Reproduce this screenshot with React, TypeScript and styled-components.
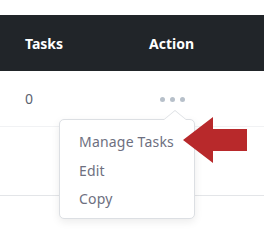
import React from 'react';
import styled, { createGlobalStyle } from 'styled-components';

const GlobalStyle = createGlobalStyle`
  body {
    margin: 0;
    background: #fff;
    font-family: 'Noto Sans', 'Open Sans', sans-serif;
  }
`;

const Screen = styled.div`
  position: relative;
  width: 275px;
  height: 238px;
  overflow: hidden;
  background: #fff;
`;

const Table = styled.div`
  padding-top: 15px;
  width: 264px;
`;

const HeadRow = styled.div`
  display: grid;
  grid-template-columns: 124px 1fr;
  align-items: center;
  height: 56px;
  padding-left: 25px;
  background: #212529;
`;

const HeadCell = styled.div`
  color: #fff;
  font-weight: 700;
  font-size: 14px;
`;

const Row = styled.div<{ $height: number }>`
  display: grid;
  grid-template-columns: 124px 1fr;
  align-items: center;
  height: ${p => p.$height}px;
  padding-left: 25px;
  border-bottom: 1px solid ${p => (p.$height > 60 ? '#e3e5e8' : '#f1f2f4')};
  box-sizing: border-box;
  color: #5b6270;
  font-size: 14px;
`;

const ActionCell = styled.div`
  position: relative;
  height: 100%;
  display: flex;
  align-items: center;
`;

const Dots = styled.div`
  display: flex;
  gap: 5px;
  margin-left: 11px;
  margin-top: 1px;
  span {
    width: 5px;
    height: 5px;
    border-radius: 50%;
    background: #b7c0ca;
  }
`;

const Menu = styled.div`
  position: absolute;
  left: -90px;
  top: 48px;
  width: 136px;
  height: 100px;
  box-sizing: border-box;
  background: #fff;
  border: 1px solid #dcdfe3;
  border-radius: 5px;
  box-shadow: 0 3px 8px rgba(0, 0, 0, 0.08);
  padding-top: 8px;
  z-index: 2;

  &::before {
    content: '';
    position: absolute;
    left: 103px;
    top: -10px;
    border-left: 12px solid transparent;
    border-right: 12px solid transparent;
    border-bottom: 10px solid #dcdfe3;
  }
  &::after {
    content: '';
    position: absolute;
    left: 104px;
    top: -9px;
    border-left: 11px solid transparent;
    border-right: 11px solid transparent;
    border-bottom: 9px solid #fff;
  }
`;

const MenuItem = styled.div`
  height: 28.5px;
  line-height: 28.5px;
  padding-left: 19px;
  font-size: 14px;
  color: #6d6f80;
  letter-spacing: 0.2px;
`;

const Pointer = styled.svg`
  position: absolute;
  left: 183px;
  top: 117px;
  z-index: 3;
`;

export default function App() {
  return (
    <Screen>
      <GlobalStyle />
      <Table>
        <HeadRow>
          <HeadCell>Tasks</HeadCell>
          <HeadCell>Action</HeadCell>
        </HeadRow>
        <Row $height={56}>
          <div>0</div>
          <ActionCell>
            <Dots>
              <span />
              <span />
              <span />
            </Dots>
            <Menu>
              <MenuItem>Manage Tasks</MenuItem>
              <MenuItem>Edit</MenuItem>
              <MenuItem>Copy</MenuItem>
            </Menu>
          </ActionCell>
        </Row>
        <Row $height={69} />
      </Table>
      <Pointer width="64" height="48" viewBox="0 0 64 48">
        <polygon points="0,23 30,0 30,12 64,12 64,34 30,34 30,46" fill="#b8292b" />
      </Pointer>
    </Screen>
  );
}
